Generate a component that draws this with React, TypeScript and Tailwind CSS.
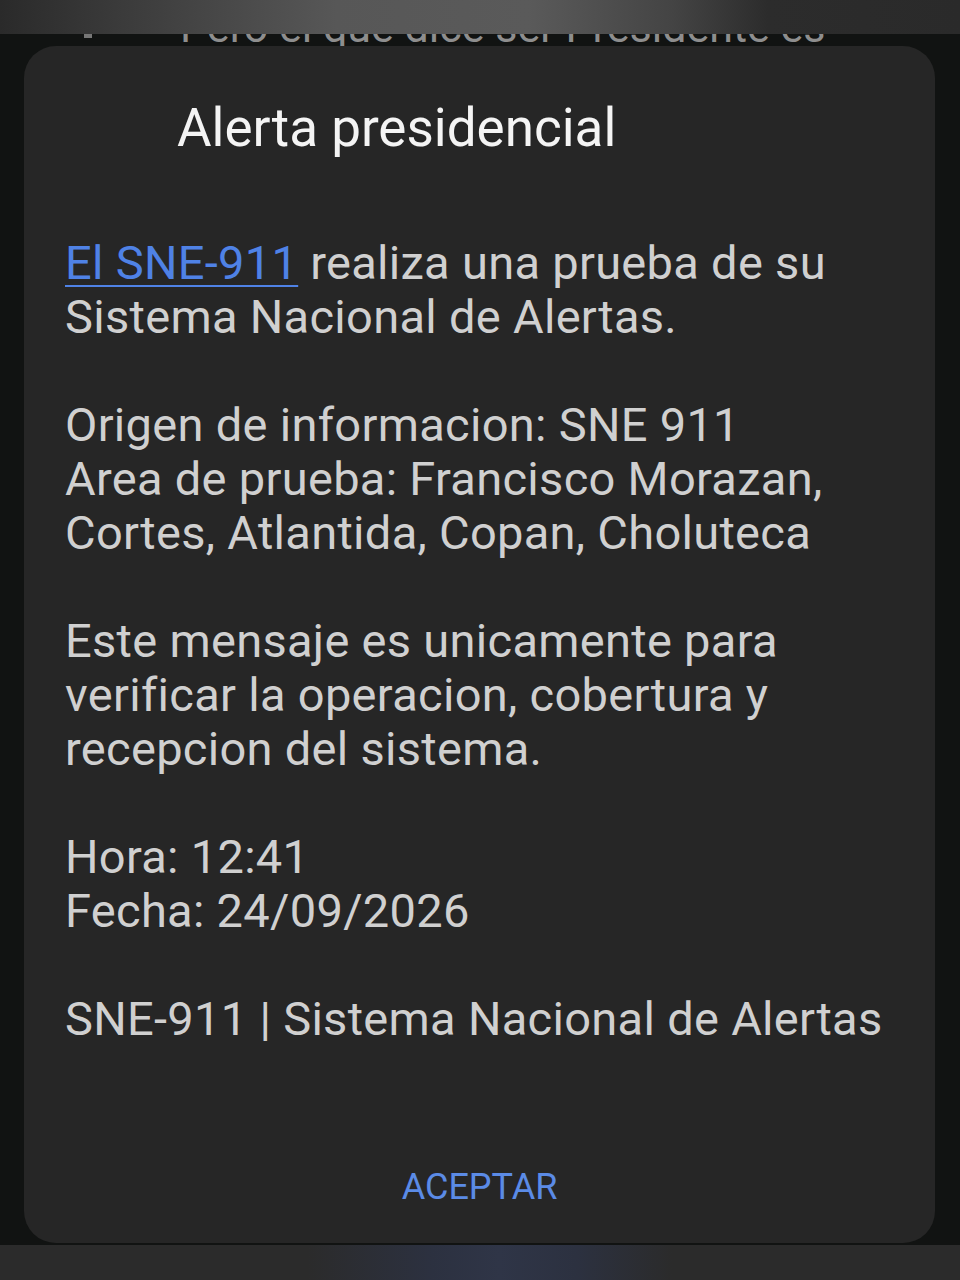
export default function App() {
  const body =
    "font-['Roboto',sans-serif] text-[47px] leading-[54px] tracking-[0.3px] text-[#d0d0d0] whitespace-nowrap";

  return (
    <div className="w-[960px] h-[1280px] bg-[#111312] flex flex-col overflow-hidden font-['Roboto',sans-serif]">
      {/* status area behind the dialog */}
      <div className="h-[34px] shrink-0 bg-[linear-gradient(90deg,#2a2a2a_0%,#3a3a3a_12%,#575757_35%,#5a5a5a_55%,#444_70%,#2c2c2c_80%,#2a2a2a_100%)]" />

      {/* clipped message line from the chat behind */}
      <div className="h-[12px] shrink-0 overflow-hidden relative">
        <div className="absolute left-[180px] top-[-32px] text-[43px] leading-[50px] text-[#8e8e8e] whitespace-nowrap">
          Pero el que dice ser Presidente es
        </div>
        <div className="absolute left-[84px] top-[0px] w-[8px] h-[4px] bg-[#777]" />
      </div>

      <div className="flex-1 min-h-0 px-[24px] pb-[2px]">
        <div className="h-full w-[911px] bg-[#262626] rounded-[32px] flex flex-col">
          <div className="pl-[153px] pt-[52px] text-[53px] leading-[60px] text-[#f4f4f4] whitespace-nowrap">
            Alerta presidencial
          </div>

          <div className="pl-[41px] pt-[78px] flex flex-col gap-[54px]">
            <p className={body}>
              <span className="text-[#4f82e6] underline decoration-[2px] underline-offset-[6px]">El SNE-911</span>{" "}
              realiza una prueba de su
              <br />
              Sistema Nacional de Alertas.
            </p>
            <p className={body}>
              Origen de informacion: SNE 911
              <br />
              Area de prueba: Francisco Morazan,
              <br />
              Cortes, Atlantida, Copan, Choluteca
            </p>
            <p className={body}>
              Este mensaje es unicamente para
              <br />
              verificar la operacion, cobertura y
              <br />
              recepcion del sistema.
            </p>
            <p className={body}>
              Hora: 12:41
              <br />
              Fecha: 24/09/2026
            </p>
            <p className={body}>SNE-911 | Sistema Nacional de Alertas</p>
          </div>

          <div className="flex-1" />
          <div className="flex justify-center pb-[36px]">
            <button className="text-[36px] leading-[40px] text-[#5b8be6]">ACEPTAR</button>
          </div>
        </div>
      </div>

      {/* navigation strip */}
      <div className="h-[35px] shrink-0 bg-[linear-gradient(90deg,#2b2b2b_0%,#2b2b2b_32%,#2c3140_45%,#2f3547_52%,#2c3140_60%,#2b2b2b_70%,#2b2b2b_100%)]" />
    </div>
  );
}
